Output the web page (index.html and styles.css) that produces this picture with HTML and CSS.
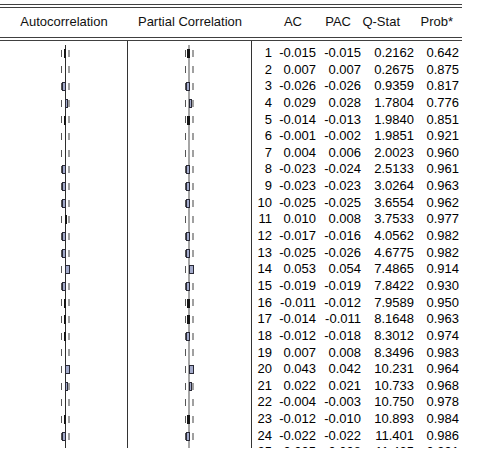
FILE: index.html
```html
<!DOCTYPE html>
<html lang="en">
<head>
<meta charset="utf-8">
<title>Correlogram</title>
<link rel="stylesheet" href="styles.css">
</head>
<body>
<div class="corr">
  <div class="dbl top"></div>
  <div class="head">
    <div class="hc">Autocorrelation</div>
    <div class="hc">Partial Correlation</div>
    <div></div>
    <div class="hn h-ac">AC</div>
    <div class="hn h-pac">PAC</div>
    <div class="hn h-q">Q-Stat</div>
    <div class="hn h-p">Prob*</div>
  </div>
  <div class="dbl"></div>
  <div class="body">
    <div class="acol">
      <div class="cell"><span class="bar thin neg" style="width:2px"></span></div>
      <div class="cell"></div>
      <div class="cell"><span class="bar box neg" style="width:4px"></span></div>
      <div class="cell"><span class="bar box pos" style="width:3px"></span></div>
      <div class="cell"><span class="bar thin neg" style="width:2px"></span></div>
      <div class="cell"></div>
      <div class="cell"></div>
      <div class="cell"><span class="bar box neg" style="width:4px"></span></div>
      <div class="cell"><span class="bar box neg" style="width:4px"></span></div>
      <div class="cell"><span class="bar box neg" style="width:4px"></span></div>
      <div class="cell"><span class="bar thin pos" style="width:2px"></span></div>
      <div class="cell"><span class="bar box neg" style="width:4px"></span></div>
      <div class="cell"><span class="bar box neg" style="width:4px"></span></div>
      <div class="cell"><span class="bar box pos" style="width:5px"></span></div>
      <div class="cell"><span class="bar box neg" style="width:4px"></span></div>
      <div class="cell"><span class="bar thin neg" style="width:2px"></span></div>
      <div class="cell"><span class="bar thin neg" style="width:2px"></span></div>
      <div class="cell"><span class="bar thin neg" style="width:2px"></span></div>
      <div class="cell"></div>
      <div class="cell"><span class="bar box pos" style="width:5px"></span></div>
      <div class="cell"><span class="bar box pos" style="width:3px"></span></div>
      <div class="cell"></div>
      <div class="cell"><span class="bar thin neg" style="width:2px"></span></div>
      <div class="cell"><span class="bar box neg" style="width:4px"></span></div>
      <div class="cell"></div>
    </div>
    <div class="pcol">
      <div class="cell"><span class="bar thin neg" style="width:3px"></span></div>
      <div class="cell"></div>
      <div class="cell"><span class="bar box neg" style="width:4px"></span></div>
      <div class="cell"><span class="bar box pos" style="width:3px"></span></div>
      <div class="cell"><span class="bar thin neg" style="width:3px"></span></div>
      <div class="cell"></div>
      <div class="cell"></div>
      <div class="cell"><span class="bar box neg" style="width:4px"></span></div>
      <div class="cell"><span class="bar box neg" style="width:4px"></span></div>
      <div class="cell"><span class="bar box neg" style="width:4px"></span></div>
      <div class="cell"></div>
      <div class="cell"><span class="bar box neg" style="width:4px"></span></div>
      <div class="cell"><span class="bar box neg" style="width:4px"></span></div>
      <div class="cell"><span class="bar box pos" style="width:5px"></span></div>
      <div class="cell"><span class="bar box neg" style="width:4px"></span></div>
      <div class="cell"><span class="bar thin neg" style="width:3px"></span></div>
      <div class="cell"><span class="bar thin neg" style="width:3px"></span></div>
      <div class="cell"><span class="bar box neg" style="width:4px"></span></div>
      <div class="cell"></div>
      <div class="cell"><span class="bar box pos" style="width:5px"></span></div>
      <div class="cell"><span class="bar box pos" style="width:3px"></span></div>
      <div class="cell"></div>
      <div class="cell"><span class="bar thin neg" style="width:3px"></span></div>
      <div class="cell"><span class="bar box neg" style="width:4px"></span></div>
      <div class="cell"></div>
    </div>
    <div class="ncol">
      <div class="nrow"><span>1</span><span>-0.015</span><span>-0.015</span><span>0.2162</span><span>0.642</span></div>
      <div class="nrow"><span>2</span><span>0.007</span><span>0.007</span><span>0.2675</span><span>0.875</span></div>
      <div class="nrow"><span>3</span><span>-0.026</span><span>-0.026</span><span>0.9359</span><span>0.817</span></div>
      <div class="nrow"><span>4</span><span>0.029</span><span>0.028</span><span>1.7804</span><span>0.776</span></div>
      <div class="nrow"><span>5</span><span>-0.014</span><span>-0.013</span><span>1.9840</span><span>0.851</span></div>
      <div class="nrow"><span>6</span><span>-0.001</span><span>-0.002</span><span>1.9851</span><span>0.921</span></div>
      <div class="nrow"><span>7</span><span>0.004</span><span>0.006</span><span>2.0023</span><span>0.960</span></div>
      <div class="nrow"><span>8</span><span>-0.023</span><span>-0.024</span><span>2.5133</span><span>0.961</span></div>
      <div class="nrow"><span>9</span><span>-0.023</span><span>-0.023</span><span>3.0264</span><span>0.963</span></div>
      <div class="nrow"><span>10</span><span>-0.025</span><span>-0.025</span><span>3.6554</span><span>0.962</span></div>
      <div class="nrow"><span>11</span><span>0.010</span><span>0.008</span><span>3.7533</span><span>0.977</span></div>
      <div class="nrow"><span>12</span><span>-0.017</span><span>-0.016</span><span>4.0562</span><span>0.982</span></div>
      <div class="nrow"><span>13</span><span>-0.025</span><span>-0.026</span><span>4.6775</span><span>0.982</span></div>
      <div class="nrow"><span>14</span><span>0.053</span><span>0.054</span><span>7.4865</span><span>0.914</span></div>
      <div class="nrow"><span>15</span><span>-0.019</span><span>-0.019</span><span>7.8422</span><span>0.930</span></div>
      <div class="nrow"><span>16</span><span>-0.011</span><span>-0.012</span><span>7.9589</span><span>0.950</span></div>
      <div class="nrow"><span>17</span><span>-0.014</span><span>-0.011</span><span>8.1648</span><span>0.963</span></div>
      <div class="nrow"><span>18</span><span>-0.012</span><span>-0.018</span><span>8.3012</span><span>0.974</span></div>
      <div class="nrow"><span>19</span><span>0.007</span><span>0.008</span><span>8.3496</span><span>0.983</span></div>
      <div class="nrow"><span>20</span><span>0.043</span><span>0.042</span><span>10.231</span><span>0.964</span></div>
      <div class="nrow"><span>21</span><span>0.022</span><span>0.021</span><span>10.733</span><span>0.968</span></div>
      <div class="nrow"><span>22</span><span>-0.004</span><span>-0.003</span><span>10.750</span><span>0.978</span></div>
      <div class="nrow"><span>23</span><span>-0.012</span><span>-0.010</span><span>10.893</span><span>0.984</span></div>
      <div class="nrow"><span>24</span><span>-0.022</span><span>-0.022</span><span>11.401</span><span>0.986</span></div>
      <div class="nrow"><span>25</span><span>-0.005</span><span>-0.008</span><span>11.435</span><span>0.991</span></div>
    </div>
  </div>
</div>
</body>
</html>
```
FILE: styles.css
```css
html, body {
  margin: 0;
  padding: 0;
  background: #fff;
}

body {
  font-family: "Liberation Sans", Arial, sans-serif;
  font-size: 13px;
  color: #000;
}

.corr {
  width: 462px;
}

.dbl {
  height: 2px;
  border-top: 1px solid #404040;
  border-bottom: 1px solid #404040;
}

.dbl.top {
  margin-top: 4px;
}

.head {
  display: grid;
  grid-template-columns: 128px 124px 20px 44px 45px 53px 45px;
  height: 29px;
  line-height: 27px;
  color: #111;
}

.hc {
  text-align: center;
  white-space: nowrap;
}

.hn {
  text-align: right;
  white-space: nowrap;
}

.h-ac { padding-right: 14px; }
.h-pac { padding-right: 10px; }
.h-q { padding-right: 14px; }
.h-p { padding-right: 6px; }

.body {
  display: flex;
  height: 407px;
  overflow: hidden;
}

.acol,
.pcol {
  border-right: 1px solid #333;
  padding-top: 4px;
}

.acol { width: 127px; }
.pcol { width: 123px; }

.ncol {
  flex: 1;
  padding-top: 4px;
}

.cell {
  position: relative;
  height: 16.65px;
}

.acol .cell {
  background:
    linear-gradient(#2e2e2e, #2e2e2e) 65px 0 / 1px 100% no-repeat,
    linear-gradient(#555, #555) 61px 50% / 1px 7px no-repeat,
    linear-gradient(#a0a0a0, #a0a0a0) 68px 50% / 2px 7px no-repeat;
}

.pcol .cell {
  background:
    linear-gradient(#a6a6a6, #a6a6a6) 60px 0 / 2px 100% no-repeat,
    linear-gradient(#555, #555) 57px 50% / 1px 7px no-repeat,
    linear-gradient(#a0a0a0, #a0a0a0) 64px 50% / 2px 7px no-repeat;
}

.bar {
  position: absolute;
  top: 4px;
  height: 9px;
  box-sizing: border-box;
}

.bar.box {
  border: 1px solid #2a2a36;
  background: #a3abcb;
}

.bar.thin {
  background: #151515;
}

.acol .neg { right: 61px; }
.acol .pos { left: 65px; }
.pcol .neg { right: 61px; }
.pcol .pos { left: 61px; }

.nrow {
  display: grid;
  grid-template-columns: 20px 44px 45px 53px 45px;
  height: 16.65px;
  line-height: 16.65px;
  white-space: nowrap;
}

.nrow span {
  text-align: right;
}
```
